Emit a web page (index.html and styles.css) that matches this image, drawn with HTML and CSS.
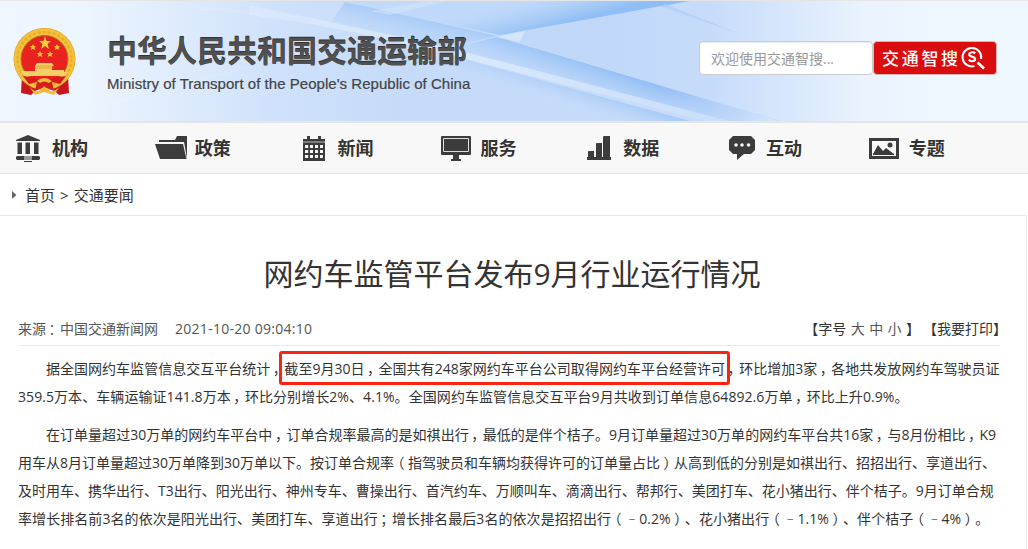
FILE: index.html
```html
<!DOCTYPE html>
<html lang="zh-CN">
<head>
<meta charset="utf-8">
<title>网约车监管平台发布9月行业运行情况</title>
<link rel="stylesheet" href="styles.css">
</head>
<body>
<header class="banner">
  <svg class="banner-art" viewBox="0 0 1028 120" preserveAspectRatio="none" aria-hidden="true">
    <defs>
      <linearGradient id="base"><stop offset="0" stop-color="#eff6fe"/><stop offset=".08" stop-color="#edf5fe"/><stop offset=".27" stop-color="#cfe1fb"/><stop offset=".4" stop-color="#c5dbf9"/><stop offset=".69" stop-color="#c7dcfa"/><stop offset=".76" stop-color="#d6e6fc"/><stop offset=".84" stop-color="#eaf3fe"/><stop offset=".91" stop-color="#eef6fe"/><stop offset="1" stop-color="#eef6fe"/></linearGradient>
      <linearGradient id="up" gradientUnits="userSpaceOnUse" x1="560" y1="24" x2="551" y2="-10"><stop offset="0" stop-color="#8fbdf5"/><stop offset=".5" stop-color="#a9cdf8" stop-opacity=".7"/><stop offset="1" stop-color="#b8d5f9" stop-opacity="0"/></linearGradient>
      <linearGradient id="down" gradientUnits="userSpaceOnUse" x1="620" y1="72" x2="609" y2="104"><stop offset="0" stop-color="#95c0f5"/><stop offset="1" stop-color="#b9d5f9" stop-opacity=".3"/></linearGradient>
      <linearGradient id="fade" gradientUnits="userSpaceOnUse" x1="660" y1="0" x2="775" y2="0"><stop offset="0" stop-color="#c7dcfa" stop-opacity="0"/><stop offset="1" stop-color="#d6e6fc"/></linearGradient>
      <linearGradient id="facet" gradientUnits="userSpaceOnUse" x1="500" y1="0" x2="740" y2="0"><stop offset="0" stop-color="#bdd5f8" stop-opacity=".6"/><stop offset=".6" stop-color="#bdd5f8" stop-opacity=".5"/><stop offset="1" stop-color="#c7dcfa" stop-opacity="0"/></linearGradient>
      <linearGradient id="stripe" gradientUnits="userSpaceOnUse" x1="250" y1="0" x2="740" y2="0"><stop offset="0" stop-color="#e4effd" stop-opacity=".4"/><stop offset=".5" stop-color="#d7e7fc"/><stop offset="1" stop-color="#c8defb"/></linearGradient>
      <linearGradient id="soft" gradientUnits="userSpaceOnUse" x1="580" y1="85" x2="572" y2="110"><stop offset="0" stop-color="#a4c9f7"/><stop offset="1" stop-color="#c5dbf9" stop-opacity="0"/></linearGradient>
      <linearGradient id="left" gradientUnits="userSpaceOnUse" x1="425" y1="19" x2="418" y2="50"><stop offset="0" stop-color="#a9ccf7"/><stop offset="1" stop-color="#bcd7fa" stop-opacity="0"/></linearGradient>
    </defs>
    <rect width="1028" height="120" fill="url(#base)"/>
    <path d="M240 0H690L497 36 345 1Z" fill="#bbd6fa" opacity=".45"/>
    <path d="M345 1 497 35 440 48 330 22Z" fill="url(#left)"/>
    <path d="M345 0H690L500 34Z" fill="url(#up)"/>
    <path d="M390 14 448 0H428L370 10Z" fill="#d5e6fc" opacity=".5"/>
    <path d="M497 36 780 120H715L440 50Z" fill="url(#down)"/>
    <path d="M660 84 780 120H715L660 104Z" fill="url(#fade)"/>
    <path d="M440 52 500 68 690 120H570L440 60Z" fill="url(#soft)"/>
    <path d="M250 5C340 22 430 42 500 60L729 120H706L500 67C430 48 340 25 250 14Z" fill="url(#stripe)"/>
    <path d="M497 36 660 5 750 35V110Z" fill="url(#facet)"/>
    <path d="M497 36 525 30 520 41Z" fill="#d4e5fc"/>
    <path d="M660 5 740 33 665 3Z" fill="#acccf6" opacity=".7"/>
    <path d="M90 110C170 80 260 70 350 35M200 7C230 7 260 14 280 20" fill="none" stroke="#fff" stroke-width="2" opacity=".1"/>
  </svg>
  <div class="brand">
    <svg class="emblem" viewBox="0 0 64 68" aria-hidden="true">
      <path d="M9 47 8 65 18 67 24 61H40L46 67 56 65 55 47Z" fill="#c9151b"/>
      <circle cx="31.500" cy="31" r="31" fill="#d99a20"/>
      <circle cx="31.500" cy="31" r="30.500" fill="#f3c13b"/>
      <circle cx="31.500" cy="31" r="27" fill="none" stroke="#e5ad2e" stroke-width="2" stroke-dasharray="3 2"/>
      <circle cx="31.500" cy="31" r="23.500" fill="#e8221f" stroke="#b77318"/>
      <path d="M32 8 33.500 13 38 13 34.500 16 36 21 32 18 28 21 29.500 16 26 13 30.500 13Z" fill="#f8d03c"/>
      <g fill="#f0bd35"><path d="m20 16 1 2 2 0-1.500 2 1 2-2.500-1-2.500 1 1-2-1.500-2 2 0Z"/><path d="m44 16 1 2 2 0-1.500 2 1 2-2.500-1-2.500 1 1-2-1.500-2 2 0Z"/><path d="m27 23 1 2 2 0-1.500 2 1 2-2.500-1-2.500 1 1-2-1.500-2 2 0Z"/><path d="m37 23 1 2 2 0-1.500 2 1 2-2.500-1-2.500 1 1-2-1.500-2 2 0Z"/></g>
      <path d="M24 35H39L41 38H39V42H51V44H55L52 48H11L8 43H22V38Z" fill="#f6cf66"/>
      <path d="M22 40H41M23 38H40" stroke="#de8c28" stroke-width=".7"/>
      <path d="M10 48 23 50Q28 56 31.500 51 35 56 40 50L53 48 47 56 39 54 41 63 31.500 59 22 63 24 54 16 56Z" fill="#d91b1b"/>
      <path d="M24 53Q31 47 39 53L36 55Q31 52 27 55ZM16 58Q23 67 29 61L31 58 34 61Q40 67 47 58L41 67 31 64 22 67Z" fill="#f1bd36"/>
    </svg>
    <div class="brand-text">
      <div class="brand-name">中华人民共和国交通运输部</div>
      <div class="brand-en">Ministry of Transport of the People's Republic of China</div>
    </div>
  </div>
  <form class="search">
    <input class="search-input" type="text" placeholder="欢迎使用交通智搜...">
    <button class="search-button" type="button"><span>交通智搜</span>
      <svg width="24" height="24" viewBox="0 0 24 24" fill="none" stroke="#fff"><path d="M13.500 20.100A9.300 9.300 0 1 1 20 13" stroke-width="2"/><path d="M14.200 7.300C12.500 5.700 8 6 8.200 8.600 8.400 11.200 14.200 10.200 14.200 13 14.200 15.800 9.300 15.800 7.700 13.700" stroke-width="2"/><path d="m16.500 16.500 6.500 6" stroke-width="2.600"/></svg>
    </button>
  </form>
</header>
<nav class="nav">
  <a class="nav-item"><span class="nav-icon"><svg width="24" height="28" viewBox="0 0 24 28"><path d="M12 1 24 6V7H0V6ZM1.500 8.500H6V20H1.500ZM9.500 8.500H14V20H9.500ZM18 8.500H22.500V20H18ZM1 22H8V26H1L0 25V23ZM16 22H23L24 23V25L23 26H16ZM8 22.500H16V23.500H8ZM8 24.500H16V25.500H8ZM8 27H16V28H8Z"/></svg></span>机构</a>
  <a class="nav-item wide"><span class="nav-icon"><svg width="32" height="24" viewBox="0 0 32 24"><path d="M4 4H20L22 0H32V22L29 6H4Z"/><path d="M0 8H28L31.500 23H5Z"/></svg></span>政策</a>
  <a class="nav-item cal"><span class="nav-icon"><svg width="22" height="25" viewBox="0 0 22 25"><path d="M0 3H4V0H7V3H15V0H18V3H22V25H0Z"/><path d="M0 6H22" stroke="#bbb"/><path d="M2 9H5.200V12H2ZM7 9H10V12H7ZM12 9H15V12H12ZM17 9H20V12H17ZM2 14H5.200V17H2ZM7 14H10V17H7ZM12 14H15V17H12ZM17 14H20V17H17ZM2 19H5.200V22H2ZM7 19H10V22H7ZM12 19H15V22H12ZM17 19H20V22H17Z" fill="#f8f8f8"/></svg></span>新闻</a>
  <a class="nav-item wide"><span class="nav-icon"><svg width="30" height="25" viewBox="0 0 30 25"><path d="M1 0H29Q30 0 30 1V18Q30 19 29 19H18V23H20V25H10V23H12V19H1Q0 19 0 18V1Q0 0 1 0Z"/><path d="M2.500 2.500H27.500V15.500H2.500Z" fill="none" stroke="#ddd"/></svg></span>服务</a>
  <a class="nav-item"><span class="nav-icon"><svg width="24" height="24" viewBox="0 0 24 24"><path d="M0 21H1V16Q1 15 2 15H7V21H9V8Q9 7 10 7H15V21H16V1Q16 0 17 0H23V21H24V24H0Z"/></svg></span>数据</a>
  <a class="nav-item chat"><span class="nav-icon"><svg width="26" height="24" viewBox="0 0 26 24"><path d="M4 0H22L26 4V14L22 18H15L8 24V18H4L0 14V4Z"/><g fill="#f8f8f8"><circle cx="7" cy="9" r="1.800"/><circle cx="13" cy="9" r="1.800"/><circle cx="19.500" cy="9" r="1.800"/></g></svg></span>互动</a>
  <a class="nav-item wide"><span class="nav-icon"><svg width="30" height="21" viewBox="0 0 30 21"><path d="M0 0H30V21H0ZM3 3V18H27V3Z" fill-rule="evenodd"/><path d="M4 16 9 7 14 13 17 10 25 16V17H4Z"/><circle cx="21" cy="7" r="2.500"/></svg></span>专题</a>
</nav>
<div class="crumbs"><svg width="5" height="8" viewBox="0 0 5 8"><path d="M0 0 4.500 4 0 8Z" fill="#666"/></svg><span>首页 &gt; 交通要闻</span></div>
<main class="article">
  <h1>网约车监管平台发布9月行业运行情况</h1>
  <div class="meta">
    <div class="meta-source"><span>来源<i>：</i>中国交通新闻网</span><time>2021-10-20 09:04:10</time></div>
    <div class="meta-tools"><span>【字号 <a>大</a> <a>中</a> <a>小</a> 】</span><span>【我要打印】</span></div>
  </div>
  <div class="text">
    <p><span class="line first">据全国网约车监管信息交互平台统计<i>，</i><mark>截至9月30日<i>，</i>全国共有248家网约车平台公司取得网约车平台经营许可</mark><i>，</i>环比增加3家<i>，</i>各地共发放网约车驾驶员证</span><span class="line loose">359.5万本、车辆运输证141.8万本<i>，</i>环比分别增长2%、4.1%。全国网约车监管信息交互平台9月共收到订单信息64892.6万单<i>，</i>环比上升0.9%。</span></p>
    <p><span class="line">　　在订单量超过30万单的网约车平台中<i>，</i>订单合规率最高的是如祺出行<i>，</i>最低的是伴个桔子。9月订单量超过30万单的网约车平台共16家<i>，</i>与8月份相比<i>，</i>K9</span><span class="line tight">用车从8月订单量超过30万单降到30万单以下。按订单合规率<b>（</b>指驾驶员和车辆均获得许可的订单量占比<b>）</b>从高到低的分别是如祺出行、招招出行、享道出行、</span><span class="line tight">及时用车、携华出行、T3出行、阳光出行、神州专车、曹操出行、首汽约车、万顺叫车、滴滴出行、帮邦行、美团打车、花小猪出行、伴个桔子。9月订单合规</span><span class="line loose">率增长排名前3名的依次是阳光出行、美团打车、享道出行<i>；</i>增长排名最后3名的依次是招招出行<b>（</b><u>－</u>0.2%<b>）</b>、花小猪出行<b>（</b><u>－</u>1.1%<b>）</b>、伴个桔子<b>（</b><u>－</u>4%<b>）</b>。</span></p>
  </div>
</main>
</body>
</html>
```

FILE: styles.css
```css
* { box-sizing: border-box; }
body {
  margin: 0;
  height: 549px;
  overflow: hidden;
  display: flex;
  flex-direction: column;
  background: #fff;
  color: #333;
  font: 14px/28px "Open Sans", "Noto Sans CJK SC", sans-serif;
  text-spacing-trim: space-all;
}
svg { display: block; flex: none; }

/* Half-width punctuation centred in a full-width cell */
i, b {
  padding: 0 4.5px 0 2.5px;
  font-style: normal;
  font-weight: inherit;
  font-family: "Open Sans", "Noto Sans CJK SC", sans-serif;
  font-feature-settings: "halt";
}
b { padding: 0 3.5px; }
u {
  padding: 0 3px;
  font-size: 8px;
  text-decoration: none;
  vertical-align: 2px;
  line-height: 1;
}

.banner {
  position: relative;
  height: 123px;
  flex: none;
  display: flex;
  justify-content: space-between;
  border-top: 1px solid #e5e5e5;
  border-bottom: 2px solid #e5e5e5;
  padding: 0 31px 0 13px;
}
.banner-art { position: absolute; inset: 0; width: 100%; height: 100%; }
.brand { position: relative; display: flex; gap: 30px; padding-top: 27px; }
.emblem { width: 64px; height: 68px; }
.brand-name {
  height: 46px;
  font: bold 30px/42px "Noto Sans CJK SC", sans-serif;
  color: #505050;
  text-shadow: 0 -1px 0 #333;
}
.brand-en {
  font: 15px/20px "Liberation Sans", sans-serif;
  letter-spacing: .035px;
  color: #444;
  -webkit-text-stroke: .2px #444;
  white-space: nowrap;
}
.search { position: relative; display: flex; padding-top: 40px; }
.search-input {
  width: 174px;
  height: 34px;
  padding: 0 11px;
  border: 1px solid #ccc;
  border-radius: 4px;
  background: #fff;
  box-shadow: inset 0 1px 1px rgba(0, 0, 0, .08);
  font: 14px "Open Sans", "Noto Sans CJK SC", sans-serif;
}
.search-input::placeholder { color: #999; }
.search-button {
  width: 124px;
  height: 34px;
  display: flex;
  align-items: center;
  padding: 0 0 0 8px;
  border: 1px solid #d6b5b7;
  border-radius: 4px;
  background: #d90d0e;
  color: #fff;
  font: 500 17px/30px "Noto Sans CJK SC", sans-serif;
  letter-spacing: 2.7px;
  white-space: nowrap;
}

.nav {
  height: 51px;
  flex: none;
  display: grid;
  grid-template-columns: repeat(7, 142.8px);
  padding-left: 12px;
  background: #f8f8f8;
  border-bottom: 1px solid #e5e5e5;
  fill: #3c3c3c;
}
.nav-item {
  display: flex;
  align-items: center;
  font-size: 18px;
  font-weight: bold;
}
.nav-icon { width: 40px; padding-left: 4px; }
.wide .nav-icon { padding-left: .5px; }
.cal .nav-icon { padding-left: 5px; }
.chat .nav-icon { padding-left: 3px; }

.crumbs {
  height: 41px;
  flex: none;
  display: flex;
  align-items: center;
  gap: 8px;
  padding-left: 12px;
  font-size: 15px;
  word-spacing: 1.2px;
}
.article {
  flex: 1;
  width: 1027px;
  padding: 34px 26px 0 18px;
  border-top: 1px solid #eaeaea;
  border-right: 1px solid #eaeaea;
}
h1 {
  margin: 0 0 17px;
  padding-left: 6px;
  font-size: 30px;
  line-height: 48px;
  font-weight: 400;
  text-align: center;
}
.meta {
  height: 31px;
  display: flex;
  justify-content: space-between;
  border-bottom: 1px solid #eaeaea;
  white-space: nowrap;
}
.meta-source { display: flex; gap: 17px; color: #555; }
.meta-source time { letter-spacing: .28px; }
.meta-tools { display: flex; gap: 3px; margin-right: -7px; word-spacing: .8px; }
.meta-tools a { color: #555; }
.text { padding-top: 9px; }
p { margin: 0 0 10px; }
.line { display: block; height: 28px; white-space: nowrap; letter-spacing: .02px; }
.loose { letter-spacing: .07px; }
.tight { letter-spacing: 0; }
.first { text-indent: 28px; }
mark {
  position: relative;
  background: none;
  color: inherit;
}
mark::after {
  content: "";
  position: absolute;
  inset: -8px -5px -7px;
  border: 3px solid #fb2312;
  border-radius: 3px;
}
```
